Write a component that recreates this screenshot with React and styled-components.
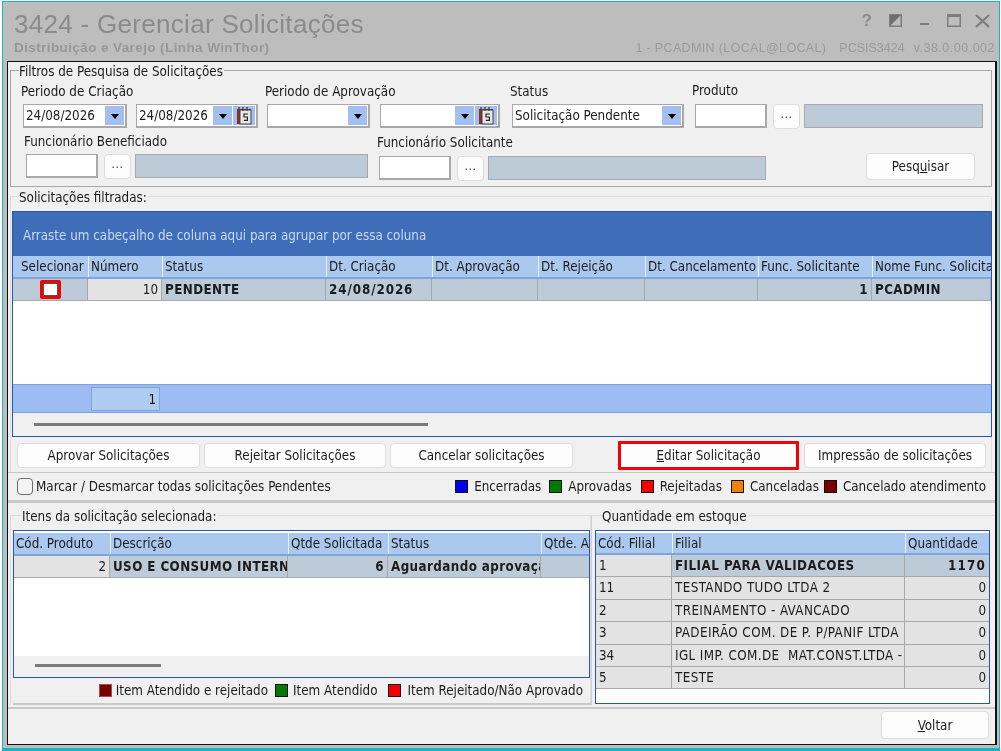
import React from "react";
import styled, {createGlobalStyle} from "styled-components";

const GlobalStyle = createGlobalStyle`
  html, body {
    margin: 0;
    padding: 0;
    background: #ffffff;
  }
  * {
    box-sizing: border-box;
  }
`

const FONT = `"DejaVu Sans Condensed", "DejaVu Sans", "Noto Sans", sans-serif`;
const HEAD_FONT = `"Liberation Sans", Arial, sans-serif`;

const Page = styled.div`
  width: 1001px;
  height: 751px;
  overflow: hidden;
  padding: 1px 0 0 2px;
  font-family: ${FONT};
  font-size: 13.3px;
  color: #1c1c1c;
`

const Window = styled.div`
  width: 998px;
  height: 750px;
  display: flex;
  flex-direction: column;
  background: #bdbdbd;
  border: solid #18b4c6;
  border-width: 1px 1px 3px 1px;
  filter: blur(0.35px);
`

const TitleBar = styled.div`
  height: 59px;
  flex: none;
  display: flex;
  justify-content: space-between;
  padding: 7px 0 0 11px;
  font-family: ${HEAD_FONT};
`

const TitleBlock = styled.div`
  display: flex;
  flex-direction: column;
`

const Title = styled.div`
  font-size: 26px;
  line-height: 31px;
  letter-spacing: 0.3px;
  color: #8b8b8b;
`

const Subtitle = styled.div`
  font-size: 13.5px;
  line-height: 16px;
  font-weight: bold;
  letter-spacing: 0.4px;
  color: #979797;
`

const InfoBlock = styled.div`
  display: flex;
  flex-direction: column;
  align-items: flex-end;
  padding-right: 4px;
`

const WindowIcons = styled.div`
  height: 21px;
  margin-top: 1px;
  display: flex;
  align-items: center;
  padding-right: 5px;
`

const WindowIcon = styled.svg`
  display: block;
  margin-left: ${p => p.$gap}px;
`

const HelpMark = styled.span`
  font-size: 17px;
  font-weight: bold;
  line-height: 21px;
  color: #8a8a8a;
`

const InfoLine = styled.div`
  margin-top: 9px;
  display: flex;
  font-size: 12.5px;
  line-height: 16px;
  color: #9a9a9a;
`

const InfoText = styled.span`
  margin-left: ${p => p.$gap || 0}px;
  letter-spacing: ${p => p.$spacing || 0}px;
`

const Client = styled.div`
  width: 990px;
  height: 684px;
  margin-left: 4px;
  display: flex;
  flex-direction: column;
  background: #f0f0f0;
  border: solid #111111;
  border-width: 1px 2px 1px 1px;
`

const Fieldset = styled.div`
  position: relative;
  flex: none;
  border: 1px solid #c4c4c4;
  background: #f0f0f0;
`

const FilterBox = styled(Fieldset)`
  height: 117px;
  margin: 8px 3px 0 2px;
  border-color: #a8a8a8;
  padding: 12px 0 0 0;
`

const ResultBox = styled(Fieldset)`
  height: 276px;
  margin: 9px 3px 0 2px;
  padding: 14px 0 0 1px;
  border-color: #dcdcdc;
  border-bottom: none;
`

const Legend = styled.div`
  position: absolute;
  top: -7px;
  left: ${p => p.$left || 8}px;
  padding-right: 1px;
  line-height: 15px;
  background: #f0f0f0;
  white-space: nowrap;
`

const FieldRow = styled.div`
  display: flex;
  align-items: flex-start;
  margin-top: ${p => p.$top || 0}px;
`

const Field = styled.div`
  display: flex;
  flex-direction: column;
  margin-left: ${p => p.$left || 0}px;
  padding-top: ${p => p.$pad || 0}px;
`

const FieldLabel = styled.label`
  line-height: 16px;
  height: ${p => p.$height || 20}px;
  margin-left: ${p => p.$shift || 0}px;
  white-space: nowrap;
`

const Controls = styled.div`
  display: flex;
  margin-left: ${p => p.$shift || 0}px;
`

const InputBox = styled.div`
  width: ${p => p.$width}px;
  height: 24px;
  display: flex;
  align-items: center;
  padding: 1px 1px 1px 2px;
  background: #ffffff;
  border: solid #a8a8a8;
  border-width: 1px 2px 2px 1px;
  margin-left: ${p => p.$left || 0}px;
  white-space: nowrap;
`

const InputText = styled.span`
  flex: 1;
  overflow: hidden;
`

const DropButton = styled.span`
  width: 19px;
  height: 19px;
  flex: none;
  display: flex;
  align-items: center;
  justify-content: center;
  background: #a3bff0;
  &::after {
    content: "";
    border: solid transparent;
    border-width: 5px 4.5px 0 4.5px;
    border-top-color: #000000;
    margin-top: 1px;
  }
`

const CalendarIcon = styled.svg`
  display: block;
  flex: none;
  margin-left: 1px;
`

const DotsButton = styled.button`
  width: 27px;
  height: 25px;
  margin-left: 6px;
  padding: 0 0 6px;
  border: 1px solid #dddddd;
  border-radius: 4px;
  background: #fdfdfd;
  font: 12px ${FONT};
  letter-spacing: 0.5px;
  color: #333333;
`

const ReadOnlyBox = styled.div`
  width: ${p => p.$width}px;
  height: 24px;
  margin-left: 4px;
  background: #bdcbd9;
  border: 1px solid #a9a9a9;
`

const ActionButton = styled.button`
  height: ${p => p.$height || 25}px;
  width: ${p => p.$width}px;
  margin-left: ${p => p.$left || 0}px;
  margin-top: ${p => p.$top || 0}px;
  padding: 0;
  border: 1px solid #dedede;
  border-radius: 4px;
  background: #fdfdfd;
  font: 13.3px ${FONT};
  color: #1c1c1c;
  flex: none;
`

const HighlightButton = styled(ActionButton)`
  height: 29px;
  border: 3px solid #f40000;
  border-radius: 1px;
`

const DataGrid = styled.div`
  display: flex;
  flex-direction: column;
  height: ${p => p.$height}px;
  width: ${p => p.$width}px;
  flex: none;
  padding-top: ${p => p.$pad || 0}px;
  background: #ffffff;
  border: 1px solid #2a56a8;
  overflow: hidden;
`

const GroupPanel = styled.div`
  height: 44px;
  flex: none;
  padding: 16px 0 0 10px;
  line-height: 15px;
  background: #3f6db8;
  color: #c8d9f1;
`

const Columns = styled.div`
  display: grid;
  grid-template-columns: ${p => p.$cols};
  flex: none;
`

const HeadRow = styled(Columns)`
  height: ${p => p.$height || 23}px;
  background: #abc8ef;
  border-bottom: 2px solid #7fa5dd;
`

const HeadCell = styled.div`
  padding: 3px 0 0 ${p => p.$pad ?? 2}px;
  line-height: 16px;
  border-left: ${p => (p.$first ? "none" : "1px solid #e6effb")};
  white-space: nowrap;
  overflow: hidden;
`

const BodyRow = styled(Columns)`
  height: ${p => p.$height}px;
`

const BodyCell = styled.div`
  padding: 0 3px 0 3px;
  line-height: 21px;
  background: ${p => (p.$plain ? "#e3e3e3" : "#bdcbd9")};
  border: solid #a9a9a9;
  border-width: 0 1px 1px 0;
  font-weight: ${p => (p.$bold ? "bold" : "normal")};
  text-align: ${p => (p.$right ? "right" : "left")};
  letter-spacing: ${p => (p.$spacing ?? (p.$bold ? 0.4 : 0))}px;
  white-space: pre;
  overflow: hidden;
`

const CheckCell = styled(BodyCell)`
  display: flex;
  align-items: center;
  justify-content: center;
`

const RedCheck = styled.span`
  width: 21px;
  height: 19px;
  display: block;
  border: 3px solid #f40000;
  border-radius: 2px;
  background: #ffffff;
  box-shadow: inset 0 0 0 1px #555555;
`

const GridFill = styled.div`
  flex: 1;
  background: #ffffff;
`

const SummaryBar = styled.div`
  height: 29px;
  flex: none;
  padding: 2px 0 0 78px;
  background: #9dbcf2;
  border-top: 1px solid #7fa0dc;
  border-bottom: 1px solid #7fa0dc;
`

const SummaryCell = styled.div`
  width: 69px;
  height: 24px;
  padding-right: 3px;
  line-height: 24px;
  text-align: right;
  background: #afcbef;
  border: 1px solid #7ea2dc;
`

const ScrollArea = styled.div`
  height: ${p => p.$height}px;
  flex: none;
  padding: ${p => p.$top}px 0 0 ${p => p.$left}px;
  background: #f0f0f0;
`

const ScrollThumb = styled.div`
  width: ${p => p.$width}px;
  height: 3px;
  background: #7b7b7b;
`

const ButtonRow = styled.div`
  display: flex;
  align-items: center;
  height: 35px;
  padding-top: 1px;
  margin-left: 5px;
`

const MarkPanel = styled.div`
  height: 31px;
  flex: none;
  display: flex;
  align-items: center;
  justify-content: space-between;
  padding: 0 9px 0 9px;
  border: solid #c9c9c9;
  border-width: 1px 0 3px 0;
`

const CheckLabel = styled.label`
  display: flex;
  align-items: center;
  white-space: nowrap;
`

const Checkbox = styled.span`
  width: 16px;
  height: 17px;
  margin-right: 3px;
  background: #f4f4f4;
  border: 1px solid #6a6a6a;
  border-radius: 4px;
`

const KeyList = styled.div`
  display: flex;
  align-items: center;
`

const Key = styled.div`
  display: flex;
  align-items: center;
  margin-left: ${p => p.$left || 0}px;
  white-space: nowrap;
`

const KeySwatch = styled.span`
  width: 13px;
  height: 13px;
  margin-right: ${p => p.$right || 6}px;
  background: ${p => p.$color};
  border: 1px solid ${p => p.$edge || "#111111"};
`

const LowerRow = styled.div`
  display: flex;
  flex: none;
  margin: 12px 5px 0 2px;
  height: 190px;
`

const ItemsBox = styled(Fieldset)`
  width: 581px;
  height: 190px;
  padding: 14px 0 0 2px;
  border-color: #dcdcdc;
  border-bottom: none;
`

const StockBox = styled(Fieldset)`
  width: 403px;
  height: 190px;
  padding: 14px 0 0 3px;
  border-color: #dcdcdc;
  border-left: 1px solid #d0d0d0;
  border-bottom: none;
  border-right: none;
`

const ItemKeys = styled.div`
  height: 27px;
  width: 578px;
  display: flex;
  justify-content: flex-end;
  align-items: center;
  padding-right: 8px;
  border-bottom: 2px solid #c9c9c9;
`

const BottomBar = styled.div`
  flex: 1;
  display: flex;
  justify-content: flex-end;
  padding: 2px 6px 0 0;
  margin-top: 2px;
  border-top: 2px solid #c9c9c9;
`

const requestCols = "75px 74px 164px 106px 106px 107px 113px 114px 119px";
const itemCols = "96px 178px 100px 153px 50px";
const stockCols = "76px 233px 85px";

const requestHeads = ["Selecionar", "Número", "Status", "Dt. Criação", "Dt. Aprovação", "Dt. Rejeição", "Dt. Cancelamento", "Func. Solicitante", "Nome Func. Solicitante"];
const itemHeads = ["Cód. Produto", "Descrição", "Qtde Solicitada", "Status", "Qtde. Atendida"];
const stockHeads = ["Cód. Filial", "Filial", "Quantidade"];

const stockRows = [
    ["1", "FILIAL PARA VALIDACOES", "1170"],
    ["11", "TESTANDO TUDO LTDA 2", "0"],
    ["2", "TREINAMENTO - AVANCADO", "0"],
    ["3", "PADEIRÃO COM. DE P. P/PANIF LTDA", "0"],
    ["34", "IGL IMP. COM.DE  MAT.CONST.LTDA - ", "0"],
    ["5", "TESTE", "0"],
];

function Calendar() {
    return (
        <CalendarIcon width="22" height="19" viewBox="0 0 22 19">
            <rect x="0" y="0" width="22" height="19" fill="#a3bff0"/>
            <rect x="4" y="3" width="14" height="15" fill="#8c2f22"/>
            <rect x="7" y="4" width="11" height="14" fill="#e8e8e8" stroke="#444" strokeWidth="1"/>
            <path d="M6 1v4M10 1v4M14 1v4" stroke="#444" strokeWidth="1.4"/>
            <path d="M15 8h-4v3h3.4v3.4h-3.6" fill="none" stroke="#222" strokeWidth="1.2"/>
        </CalendarIcon>
    )
}

function DateInput({value, left, calendar, width}) {
    return (
        <InputBox $width={width} $left={left}>
            <InputText>{value}</InputText>
            <DropButton/>
            {calendar && <Calendar/>}
        </InputBox>
    )
}

function Lookup({inputWidth, fillWidth, left}) {
    return (
        <Controls $shift={left}>
            <InputBox $width={inputWidth}/>
            <DotsButton>...</DotsButton>
            <ReadOnlyBox $width={fillWidth}/>
        </Controls>
    )
}

export default function App() {
    return (
        <Page>
            <GlobalStyle/>
            <Window>
                <TitleBar>
                    <TitleBlock>
                        <Title>3424 - Gerenciar Solicitações</Title>
                        <Subtitle>Distribuição e Varejo (Linha WinThor)</Subtitle>
                    </TitleBlock>
                    <InfoBlock>
                        <WindowIcons>
                            <HelpMark>?</HelpMark>
                            <WindowIcon $gap={17} width="13" height="13" viewBox="0 0 13 13">
                                <rect x="0.75" y="0.75" width="11.5" height="11.5" fill="none" stroke="#7d7d7d" strokeWidth="1.5"/>
                                <path d="M1 12V1h11z" fill="#6f6f6f"/>
                            </WindowIcon>
                            <WindowIcon $gap={18} width="11" height="13" viewBox="0 0 11 13">
                                <rect x="0" y="9" width="9" height="2" fill="#7d7d7d"/>
                            </WindowIcon>
                            <WindowIcon $gap={16} width="14" height="13" viewBox="0 0 14 13">
                                <rect x="0.75" y="0.75" width="12.5" height="11.5" fill="none" stroke="#7d7d7d" strokeWidth="1.5"/>
                                <rect x="0" y="0" width="14" height="3" fill="#7d7d7d"/>
                            </WindowIcon>
                            <WindowIcon $gap={14} width="15" height="14" viewBox="0 0 15 14">
                                <path d="M1 1l13 12M14 1L1 13" stroke="#7d7d7d" strokeWidth="2.2"/>
                            </WindowIcon>
                        </WindowIcons>
                        <InfoLine>
                            <InfoText $spacing={0.35}>1 - PCADMIN (LOCAL@LOCAL)</InfoText>
                            <InfoText $gap={13}>PCSIS3424</InfoText>
                            <InfoText $gap={9} $spacing={0.5}>v.38.0.00.002</InfoText>
                        </InfoLine>
                    </InfoBlock>
                </TitleBar>

                <Client>
                    <FilterBox>
                        <Legend>Filtros de Pesquisa de Solicitações</Legend>
                        <FieldRow>
                            <Field $left={10} $pad={1}>
                                <FieldLabel>Periodo de Criação</FieldLabel>
                                <Controls $shift={2}>
                                    <DateInput width={104} value="24/08/2026"/>
                                    <DateInput width={122} left={9} value="24/08/2026" calendar/>
                                </Controls>
                            </Field>
                            <Field $left={7} $pad={1}>
                                <FieldLabel>Periodo de Aprovação</FieldLabel>
                                <Controls $shift={2}>
                                    <DateInput width={103}/>
                                    <DateInput width={120} left={10} calendar/>
                                </Controls>
                            </Field>
                            <Field $left={10} $pad={1}>
                                <FieldLabel>Status</FieldLabel>
                                <Controls $shift={2}>
                                    <DateInput width={172} value="Solicitação Pendente"/>
                                </Controls>
                            </Field>
                            <Field $left={8}>
                                <FieldLabel $height={21}>Produto</FieldLabel>
                                <Lookup inputWidth={72} fillWidth={179} left={3}/>
                            </Field>
                        </FieldRow>
                        <FieldRow $top={5}>
                            <Field $left={13}>
                                <FieldLabel>Funcionário Beneficiado</FieldLabel>
                                <Lookup inputWidth={72} fillWidth={233} left={2}/>
                            </Field>
                            <Field $left={9} $pad={1}>
                                <FieldLabel $height={21}>Funcionário Solicitante</FieldLabel>
                                <Lookup inputWidth={72} fillWidth={278} left={2}/>
                            </Field>
                            <Field $left={100}>
                                <ActionButton $width={109} $height={27} $top={19}>
                                    Pesq<u>u</u>isar
                                </ActionButton>
                            </Field>
                        </FieldRow>
                    </FilterBox>

                    <ResultBox>
                        <Legend>Solicitações filtradas:</Legend>
                        <DataGrid $height={226} $width={980}>
                            <GroupPanel>Arraste um cabeçalho de coluna aqui para agrupar por essa coluna</GroupPanel>
                            <HeadRow $cols={requestCols}>
                                {requestHeads.map((h, i) => <HeadCell key={h} $first={i === 0} $pad={i === 0 ? 8 : 2}>{h}</HeadCell>)}
                            </HeadRow>
                            <BodyRow $cols={requestCols} $height={22}>
                                <CheckCell><RedCheck/></CheckCell>
                                <BodyCell $plain $right>10</BodyCell>
                                <BodyCell $bold>PENDENTE</BodyCell>
                                <BodyCell $bold $spacing={0.9}>24/08/2026</BodyCell>
                                <BodyCell/>
                                <BodyCell/>
                                <BodyCell/>
                                <BodyCell $bold $right>1</BodyCell>
                                <BodyCell $bold>PCADMIN</BodyCell>
                            </BodyRow>
                            <GridFill/>
                            <SummaryBar><SummaryCell>1</SummaryCell></SummaryBar>
                            <ScrollArea $height={23} $top={10} $left={21}><ScrollThumb $width={394}/></ScrollArea>
                        </DataGrid>
                        <ButtonRow>
                            <ActionButton $width={183}>Aprovar Solicitações</ActionButton>
                            <ActionButton $width={182} $left={4}>Rejeitar Solicitações</ActionButton>
                            <ActionButton $width={183} $left={4}>Cancelar solicitações</ActionButton>
                            <HighlightButton $width={181} $left={45}><u>E</u>ditar Solicitação</HighlightButton>
                            <ActionButton $width={182} $left={5}>Impressão de solicitações</ActionButton>
                        </ButtonRow>
                    </ResultBox>

                    <MarkPanel>
                        <CheckLabel>
                            <Checkbox/>
                            Marcar / Desmarcar todas solicitações Pendentes
                        </CheckLabel>
                        <KeyList>
                            <Key><KeySwatch $color="#0000f0"/>Encerradas</Key>
                            <Key $left={8}><KeySwatch $color="#007a00"/>Aprovadas</Key>
                            <Key $left={9}><KeySwatch $color="#f40000"/>Rejeitadas</Key>
                            <Key $left={9}><KeySwatch $color="#f48000"/>Canceladas</Key>
                            <Key $left={5}><KeySwatch $color="#7a0000"/>Cancelado atendimento</Key>
                        </KeyList>
                    </MarkPanel>

                    <LowerRow>
                        <ItemsBox>
                            <Legend $left={11}>Itens da solicitação selecionada:</Legend>
                            <DataGrid $height={148} $width={577} $pad={2}>
                                <HeadRow $cols={itemCols} $height={23}>
                                    {itemHeads.map((h, i) => <HeadCell key={h} $first={i === 0}>{h}</HeadCell>)}
                                </HeadRow>
                                <BodyRow $cols={itemCols} $height={22}>
                                    <BodyCell $plain $right>2</BodyCell>
                                    <BodyCell $bold>USO E CONSUMO INTERNO</BodyCell>
                                    <BodyCell $bold $right>6</BodyCell>
                                    <BodyCell $bold>Aguardando aprovação</BodyCell>
                                    <BodyCell/>
                                </BodyRow>
                                <GridFill/>
                                <ScrollArea $height={21} $top={8} $left={21}><ScrollThumb $width={126}/></ScrollArea>
                            </DataGrid>
                            <ItemKeys>
                                <Key><KeySwatch $color="#7a0000" $edge="#a05050" $right={4}/>Item Atendido e rejeitado</Key>
                                <Key $left={7}><KeySwatch $color="#007a00" $right={5}/>Item Atendido</Key>
                                <Key $left={11}><KeySwatch $color="#f40000"/>Item Rejeitado/Não Aprovado</Key>
                            </ItemKeys>
                        </ItemsBox>
                        <StockBox>
                            <Legend $left={10}>Quantidade em estoque</Legend>
                            <DataGrid $height={174} $width={395} $pad={2}>
                                <HeadRow $cols={stockCols} $height={22}>
                                    {stockHeads.map((h, i) => <HeadCell key={h} $first={i === 0}>{h}</HeadCell>)}
                                </HeadRow>
                                {stockRows.map((r, i) => (
                                    <BodyRow key={r[0]} $cols={stockCols} $height={22.4}>
                                        <BodyCell $plain>{r[0]}</BodyCell>
                                        <BodyCell $plain={i > 0} $bold={i === 0} $spacing={i === 0 ? 0.45 : 0.4}>{r[1]}</BodyCell>
                                        <BodyCell $plain={i > 0} $bold={i === 0} $right $spacing={i === 0 ? 1.2 : 0}>{r[2]}</BodyCell>
                                    </BodyRow>
                                ))}
                                <GridFill/>
                            </DataGrid>
                        </StockBox>
                    </LowerRow>

                    <BottomBar>
                        <ActionButton $width={108} $height={28}><u>V</u>oltar</ActionButton>
                    </BottomBar>
                </Client>
            </Window>
        </Page>
    )
}
